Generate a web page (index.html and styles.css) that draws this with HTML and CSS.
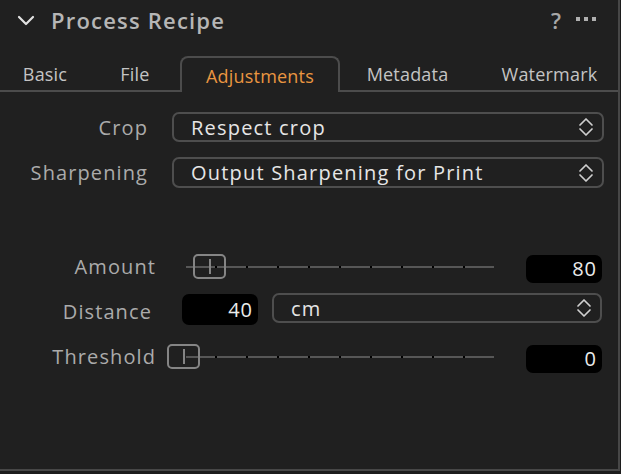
FILE: index.html
```html
<!DOCTYPE html>
<html>
<head>
<meta charset="utf-8">
<link rel="stylesheet" href="styles.css">
</head>
<body>
<div class="panel">
  <div class="header">
    <svg class="chev" width="18" height="12" viewBox="0 0 18 12"><polyline points="2,2 9,9 16,2" fill="none" stroke="#e2e2e2" stroke-width="2.2" stroke-linecap="round" stroke-linejoin="round"/></svg>
    <div class="title">Process Recipe</div>
    <div class="help">?</div>
    <div class="more"><span></span><span></span><span></span></div>
  </div>
  <div class="tabs">
    <div class="tab t1">Basic</div>
    <div class="tab t2">File</div>
    <div class="tab t3 active">Adjustments</div>
    <div class="tab t4">Metadata</div>
    <div class="tab t5">Watermark</div>
  </div>
  <div class="form">
    <div class="row row-crop">
      <div class="label lw1">Crop</div>
      <div class="select sel-wide"><span>Respect crop</span>
        <svg width="16" height="22" viewBox="0 0 16 22"><polyline points="2,9 8,3 14,9" fill="none" stroke="#cfcfcf" stroke-width="1.7" stroke-linecap="round" stroke-linejoin="round"/><polyline points="2,13 8,19 14,13" fill="none" stroke="#cfcfcf" stroke-width="1.7" stroke-linecap="round" stroke-linejoin="round"/></svg>
      </div>
    </div>
    <div class="row row-sharp">
      <div class="label lw1">Sharpening</div>
      <div class="select sel-wide"><span>Output Sharpening for Print</span>
        <svg width="16" height="22" viewBox="0 0 16 22"><polyline points="2,9 8,3 14,9" fill="none" stroke="#cfcfcf" stroke-width="1.7" stroke-linecap="round" stroke-linejoin="round"/><polyline points="2,13 8,19 14,13" fill="none" stroke="#cfcfcf" stroke-width="1.7" stroke-linecap="round" stroke-linejoin="round"/></svg>
      </div>
    </div>
    <div class="row slider-row row-amount">
      <div class="label lw2">Amount</div>
      <div class="slider">
        <div class="track"><i></i><i></i><i></i><i></i><i></i><i></i><i></i><i></i><i></i><i></i></div>
        <div class="thumb" style="left:7px"><b></b></div>
      </div>
      <div class="value">80</div>
    </div>
    <div class="row row-dist">
      <div class="label lw3 label-low">Distance</div>
      <div class="value value-in">40</div>
      <div class="select sel-unit"><span>cm</span>
        <svg width="16" height="22" viewBox="0 0 16 22"><polyline points="2,9 8,3 14,9" fill="none" stroke="#cfcfcf" stroke-width="1.7" stroke-linecap="round" stroke-linejoin="round"/><polyline points="2,13 8,19 14,13" fill="none" stroke="#cfcfcf" stroke-width="1.7" stroke-linecap="round" stroke-linejoin="round"/></svg>
      </div>
    </div>
    <div class="row slider-row row-thresh">
      <div class="label lw2">Threshold</div>
      <div class="slider">
        <div class="track"><i></i><i></i><i></i><i></i><i></i><i></i><i></i><i></i><i></i><i></i></div>
        <div class="thumb" style="left:-19px"><b></b></div>
      </div>
      <div class="value">0</div>
    </div>
  </div>
</div>
</body>
</html>
```

FILE: styles.css
```css
html, body {
  margin: 0;
  padding: 0;
  background: #1c1c1c;
}
body {
  width: 621px;
  height: 474px;
  overflow: hidden;
  font-family: "Open Sans", "Noto Sans", sans-serif;
}
.panel {
  width: 618px;
  height: 469px;
  background: #202020;
  border-right: 2px solid #474747;
  border-bottom: 2px solid #474747;
}
.header {
  height: 40px;
  display: flex;
  align-items: center;
}
.chev {
  margin-left: 17px;
  margin-top: 2px;
}
.title {
  margin-left: 16px;
  font-size: 22px;
  font-weight: 600;
  letter-spacing: 1.2px;
  color: #b6b6b6;
}
.help {
  margin-left: auto;
  font-size: 22px;
  font-weight: 600;
  color: #a8a8a8;
}
.more {
  display: flex;
  gap: 4px;
  margin-left: 15px;
  margin-right: 22px;
  margin-top: -2px;
}
.more span {
  width: 4px;
  height: 4px;
  background: #b0b0b0;
}
.tabs {
  margin-top: 16px;
  height: 34px;
  display: flex;
  border-bottom: 2px solid #4c4c4c;
}
.tab {
  font-size: 18px;
  letter-spacing: 0.2px;
  color: #c4c4c4;
  display: flex;
  align-items: center;
  justify-content: center;
  box-sizing: border-box;
  padding-top: 2px;
}
.t1 { width: 90px; }
.t2 { width: 90px; }
.t3 { width: 160px; }
.t4 { width: 135px; }
.t5 { flex: 1; padding-left: 6px; }
.tab.active {
  color: #ea9640;
  border: 2px solid #4c4c4c;
  border-bottom: none;
  border-radius: 8px 8px 0 0;
  height: 36px;
  background: #202020;
}
.form {
  padding-top: 20px;
}
.row {
  display: flex;
  align-items: center;
}
.slider-row {
  align-items: flex-start;
}
.label {
  font-size: 20px;
  letter-spacing: 1.1px;
  color: #ababab;
  text-align: right;
  flex: none;
}
.slider-row .label {
  line-height: 24px;
}
.label-low {
  padding-top: 5px;
}
.lw1 { width: 148px; margin-right: 24px; }
.lw2 { width: 156px; margin-right: 30px; }
.lw3 { width: 152px; margin-right: 30px; }
.select {
  box-sizing: border-box;
  height: 30px;
  border: 2px solid #4e4e4e;
  border-radius: 7px;
  display: flex;
  align-items: center;
  padding: 0 8px 0 17px;
  font-size: 20px;
  letter-spacing: 1.2px;
  color: #e6e6e6;
}
.select span { flex: 1; }
.sel-wide { width: 432px; }
.sel-unit { width: 330px; margin-left: 14px; }
.row-sharp { margin-top: 15px; }
.row-sharp .select { height: 31px; }
.row-amount { margin-top: 67px; }
.row-dist { margin-top: 9px; }
.row-thresh { margin-top: 20px; }
.slider {
  position: relative;
  width: 308px;
  height: 28px;
  margin-right: 32px;
}
.track {
  margin-top: 11px;
  width: 100%;
  height: 2px;
  display: flex;
  gap: 2px;
  background: #000;
}
.track i {
  flex: 1;
  background: #575757;
}
.thumb {
  position: absolute;
  top: -1px;
  width: 33px;
  height: 25px;
  box-sizing: border-box;
  border: 2px solid #858585;
  border-radius: 5px;
  display: flex;
  align-items: center;
  justify-content: center;
}
.thumb b {
  width: 2px;
  height: 15px;
  background: #858585;
}
.value {
  box-sizing: border-box;
  width: 76px;
  height: 28px;
  background: #000;
  border-radius: 7px;
  font-size: 20px;
  letter-spacing: 1px;
  color: #ececec;
  text-align: right;
  padding-right: 5px;
  line-height: 28px;
}
.value-in {
  height: 31px;
  line-height: 31px;
  margin-top: 2px;
}
.row-dist .select { margin-top: -1px; }
```
